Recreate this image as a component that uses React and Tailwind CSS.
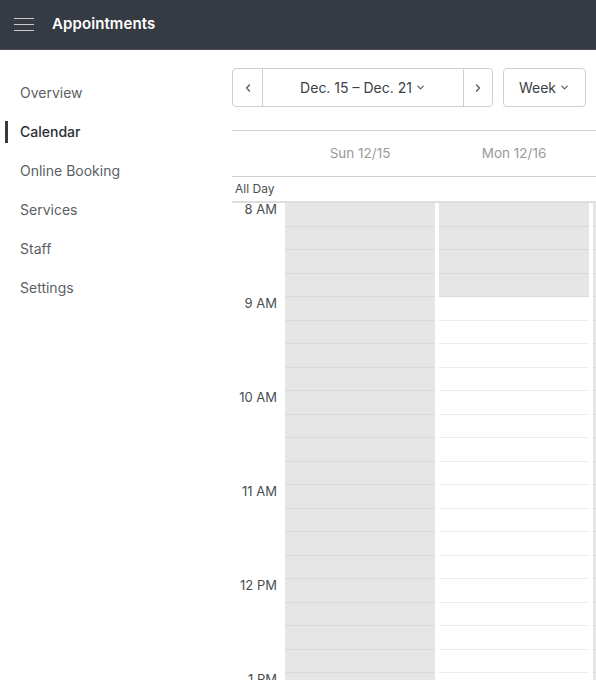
import React from 'react'
import { ChevronLeft, ChevronRight, ChevronDown } from 'lucide-react'

const navItems = ['Overview', 'Calendar', 'Online Booking', 'Services', 'Staff', 'Settings']
const hours = ['8 AM', '9 AM', '10 AM', '11 AM', '12 PM', '1 PM']

// which quarter slots are unavailable (gray) per day
const days = [
  { label: 'Sun 12/15', grayUntil: 99 },
  { label: 'Mon 12/16', grayUntil: 4 },
  { label: '', grayUntil: 99 },
]

const DayColumn = ({ grayUntil }) => {
  const slots = Array.from({ length: hours.length * 4 }, (_, i) => i)
  return (
    <div className="w-[154px] shrink-0 pr-[4px]">
      {slots.map((i) => (
        <div
          key={i}
          className={
            i < grayUntil
              ? 'h-[23.5px] bg-[#e6e6e6] border-b border-[#d9d9d9]'
              : 'h-[23.5px] bg-white border-b border-[#eeeeee]'
          }
        />
      ))}
    </div>
  )
}

const App = () => {
  return (
    <div className="w-[596px] h-[680px] overflow-hidden bg-white" style={{ fontFamily: 'Inter, "Noto Sans", sans-serif' }}>
      {/* Top bar */}
      <header className="h-[50px] bg-[#353a43] border-b border-[#4a4f57] flex items-center px-[14px]">
        <div className="flex flex-col gap-[4.5px] w-[20px]">
          <span className="block h-[1.5px] bg-[#c9cbce]" />
          <span className="block h-[1.5px] bg-[#c9cbce]" />
          <span className="block h-[1.5px] bg-[#c9cbce]" />
        </div>
        <span className="ml-[18px] text-[15px] font-semibold text-white tracking-[0.1px]">Appointments</span>
      </header>

      <div className="flex">
        {/* Sidebar */}
        <nav className="w-[232px] shrink-0 pt-[23px]">
          {navItems.map((item) => {
            const active = item === 'Calendar'
            return (
              <div key={item} className="h-[39px] flex items-center">
                <span className={active ? 'w-[3px] h-[22px] bg-[#353a43] ml-[5px]' : 'w-[3px] h-[22px] ml-[5px]'} />
                <span
                  className={
                    active
                      ? 'ml-[12px] text-[14px] font-medium text-[#2b2f35]'
                      : 'ml-[12px] text-[14px] text-[#5a5f66]'
                  }
                >
                  {item}
                </span>
              </div>
            )
          })}
        </nav>

        {/* Calendar */}
        <main className="flex-1 min-w-0 overflow-hidden">
          <div className="flex items-center mt-[18px] gap-[10px]">
            <div className="flex h-[39px] border border-[#d0d0d0] rounded-[4px] text-[#3b3f45]">
              <button className="w-[30px] flex items-center justify-center border-r border-[#d0d0d0]">
                <ChevronLeft size={12} strokeWidth={2.5} className="text-[#555]" />
              </button>
              <button className="w-[200px] flex items-center justify-center text-[14px] text-[#3b3f45]">
                Dec. 15 – Dec. 21
                <ChevronDown size={11} strokeWidth={2.5} className="ml-[3px] text-[#555]" />
              </button>
              <button className="w-[29px] flex items-center justify-center border-l border-[#d0d0d0]">
                <ChevronRight size={12} strokeWidth={2.5} className="text-[#555]" />
              </button>
            </div>
            <button className="w-[83px] h-[39px] border border-[#d0d0d0] rounded-[4px] flex items-center justify-center text-[14px] text-[#3b3f45]">
              Week
              <ChevronDown size={11} strokeWidth={2.5} className="ml-[3px] text-[#555]" />
            </button>
          </div>

          <div className="mt-[23px] w-[520px]">
            {/* Day headers */}
            <div className="flex h-[47px] border-t border-b border-[#cfcfcf]">
              <div className="w-[53px] shrink-0" />
              {days.map((d, i) => (
                <div key={i} className="w-[154px] shrink-0 pr-[4px] flex items-center justify-center text-[13.5px] text-[#9a9a9a]">
                  {d.label}
                </div>
              ))}
            </div>
            <div className="h-[26px] flex items-center pl-[3px] text-[12px] text-[#4a4f55] border-b-2 border-[#dedede]">
              All Day
            </div>

            {/* Time grid */}
            <div className="flex">
              <div className="w-[53px] shrink-0 -mt-[2px]">
                {hours.map((h) => (
                  <div key={h} className="h-[94px] pr-[8px] text-right text-[13px] leading-[16px] text-[#4a4f55]">
                    {h}
                  </div>
                ))}
              </div>
              {days.map((d, i) => (
                <DayColumn key={i} grayUntil={d.grayUntil} />
              ))}
            </div>
          </div>
        </main>
      </div>
    </div>
  )
}

export default App
